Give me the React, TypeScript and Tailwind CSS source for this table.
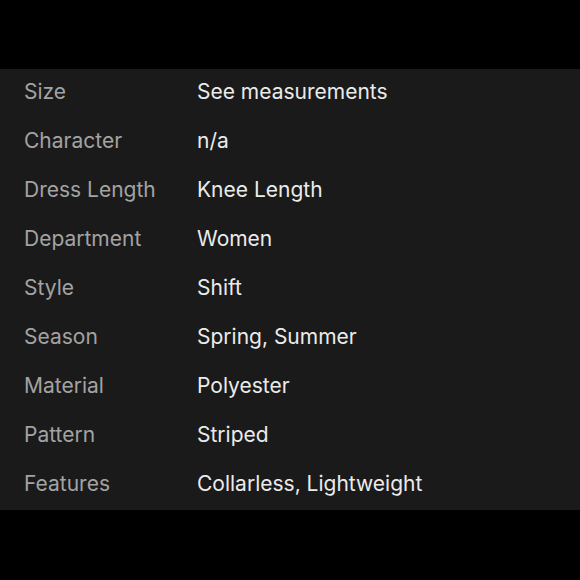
import React from 'react';

const specs: [string, string][] = [
    ['Size', 'See measurements'],
    ['Character', 'n/a'],
    ['Dress Length', 'Knee Length'],
    ['Department', 'Women'],
    ['Style', 'Shift'],
    ['Season', 'Spring, Summer'],
    ['Material', 'Polyester'],
    ['Pattern', 'Striped'],
    ['Features', 'Collarless, Lightweight'],
];

const App: React.FC = () => {
    return (
        <div className="w-[580px] h-[580px] bg-black pt-[69px]" style={{ fontFamily: 'Inter, "Noto Sans", sans-serif' }}>
            <div className="bg-[#1a1a1a]">
                {specs.map(([label, value]) => (
                    <div key={label} className="h-[49px] flex items-center pl-6 pb-[3px] text-[21px]">
                        <span className="w-[173px] text-[#a3a3a3]">{label}</span>
                        <span className="text-[#ebebeb]">{value}</span>
                    </div>
                ))}
            </div>
        </div>
    );
};

export default App;
